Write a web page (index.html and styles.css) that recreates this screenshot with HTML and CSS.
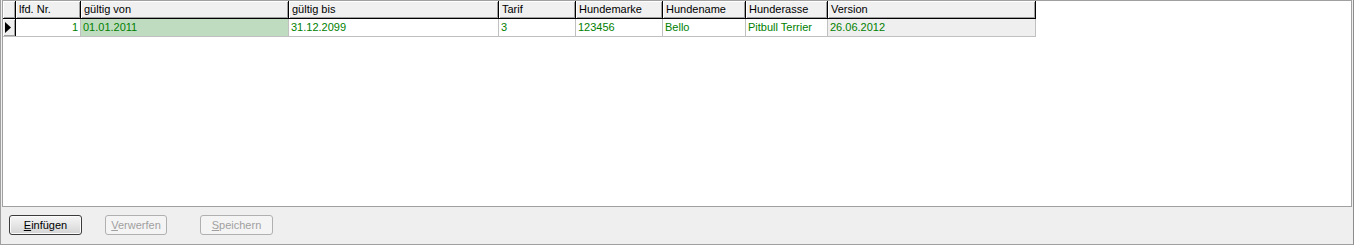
FILE: index.html
```html
<!DOCTYPE html>
<html lang="de">
<head>
    <meta charset="UTF-8">
    <title>Hundesteuer</title>
    <link rel="stylesheet" href="styles.css">
</head>
<body>
    <div class="window">
        <div class="grid-box">
            <div class="grid-row head">
                <div class="cell fixed"></div>
                <div class="cell fixed">lfd. Nr.</div>
                <div class="cell fixed">gültig von</div>
                <div class="cell fixed">gültig bis</div>
                <div class="cell fixed">Tarif</div>
                <div class="cell fixed">Hundemarke</div>
                <div class="cell fixed">Hundename</div>
                <div class="cell fixed">Hunderasse</div>
                <div class="cell fixed">Version</div>
            </div>
            <div class="grid-row data">
                <div class="cell fixed indicator">
                    <svg width="6" height="11" viewBox="0 0 6 11"><polygon points="0,0 6,5.5 0,11" fill="#000"/></svg>
                </div>
                <div class="cell num">1</div>
                <div class="cell selected">01.01.2011</div>
                <div class="cell">31.12.2099</div>
                <div class="cell">3</div>
                <div class="cell">123456</div>
                <div class="cell">Bello</div>
                <div class="cell">Pitbull Terrier</div>
                <div class="cell readonly">26.06.2012</div>
            </div>
        </div>
        <div class="button-bar">
            <button class="btn default"><u>E</u>infügen</button>
            <button class="btn discard" disabled><u>V</u>erwerfen</button>
            <button class="btn save" disabled><u>S</u>peichern</button>
        </div>
    </div>
</body>
</html>
```

FILE: styles.css
```css
body {
    margin: 0;
    background: #ffffff;
    font-family: "Liberation Sans", Arial, sans-serif;
    font-size: 11px;
}

.window {
    box-sizing: border-box;
    width: 1354px;
    height: 245px;
    background: #efefef;
    border: 1px solid #a0a0a0;
    border-top: none;
    border-right-color: #8c8c8c;
}

.grid-box {
    height: 205px;
    margin: 0 1px;
    background: #ffffff;
    border: 1px solid #a0a0a0;
}

.grid-row {
    display: grid;
    grid-template-columns: 12px 64px 207px 209px 76px 86px 82px 81px 207px;
    column-gap: 1px;
    width: max-content;
    padding-right: 1px;
}

.head {
    background: #000000;
    border-bottom: 1px solid #000000;
}

.data {
    background: #c0c0c0;
    border-bottom: 1px solid #c0c0c0;
}

.cell {
    height: 17px;
    line-height: 17px;
    padding: 0 2px;
    background: #ffffff;
    color: #008000;
    white-space: nowrap;
    overflow: hidden;
}

.fixed {
    padding-left: 3px;
    background: #f0f0f0;
    color: #000000;
    box-shadow: inset 1px 1px 0 #ffffff, inset -1px -1px 0 #a0a0a0;
}

.indicator {
    display: flex;
    align-items: center;
    padding-left: 2px;
    box-shadow: inset 1px 1px 0 #ffffff, inset -1px -1px 0 #a0a0a0, 1px 0 0 #000000;
}

.num {
    text-align: right;
}

.selected {
    background: #c0dcc0;
}

.readonly {
    background: #efefef;
}

.button-bar {
    display: flex;
    padding: 8px 0 0 8px;
}

.btn {
    box-sizing: border-box;
    height: 20px;
    padding: 0;
    font-family: inherit;
    font-size: 11px;
    color: #000000;
    border: 1px solid #707070;
    border-radius: 3px;
    background: linear-gradient(#f6f6f6, #e6e6e6 50%, #d4d4d4);
    box-shadow: inset 0 0 0 1px #fbfbfb;
}

.default {
    width: 73px;
    border-color: #3c3c3c;
}

.btn:disabled {
    color: #a0a0a0;
    border-color: #b0b0b0;
    background: #f4f4f4;
    box-shadow: none;
}

.discard {
    width: 62px;
    margin-left: 23px;
}

.save {
    width: 73px;
    margin-left: 33px;
}
```
